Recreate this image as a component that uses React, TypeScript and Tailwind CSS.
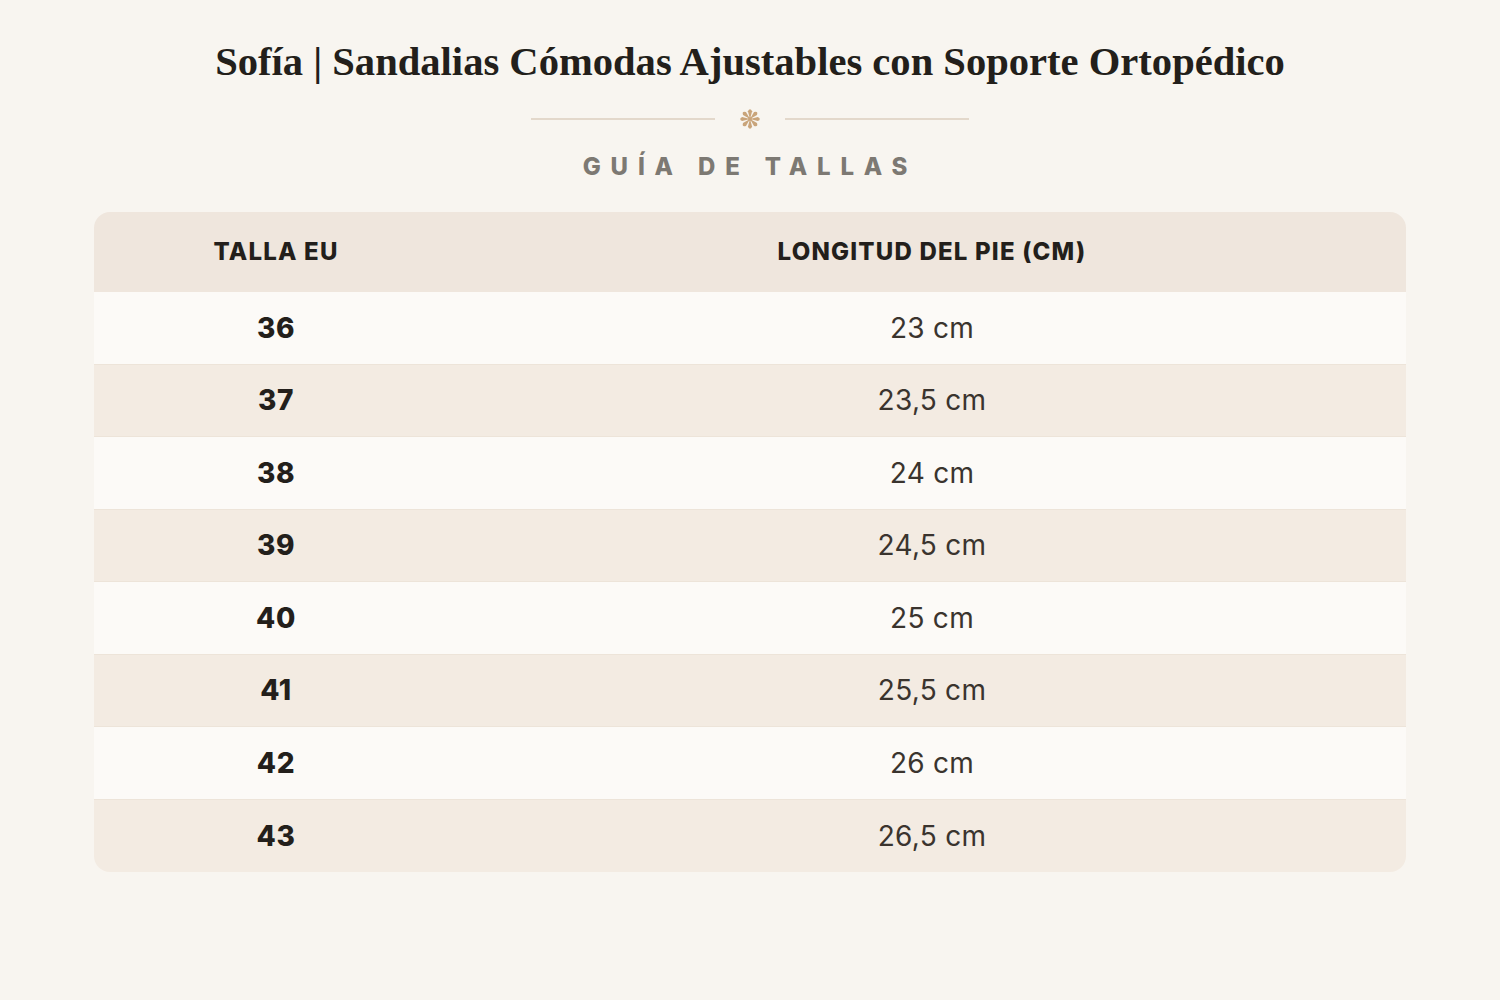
import React from "react";

const rows = [
  ["36", "23 cm"],
  ["37", "23,5 cm"],
  ["38", "24 cm"],
  ["39", "24,5 cm"],
  ["40", "25 cm"],
  ["41", "25,5 cm"],
  ["42", "26 cm"],
  ["43", "26,5 cm"],
];

function Star() {
  const arms = [0, 45, 90, 135, 180, 225, 270, 315];
  return (
    <svg width="24" height="24" viewBox="-12 -12 24 24" className="text-[#c9a47a]">
      <g fill="currentColor">
        {arms.map((a) => (
          <path key={a} d="M0 0 L-2.1 -7.8 Q0 -11.8 2.1 -7.8 Z" transform={`rotate(${a})`} />
        ))}
        <circle r="2" />
      </g>
    </svg>
  );
}

export default function App() {
  return (
    <div className="min-h-[1000px] w-full bg-[#f8f5f0] flex flex-col items-center pt-[38px] font-['Inter','Open_Sans',sans-serif]">
      <h1 className="font-['Liberation_Serif',serif] font-bold text-[40.6px] leading-[48px] text-[#231f1b]">
        Sofía | Sandalias Cómodas Ajustables con Soporte Ortopédico
      </h1>
      <div className="flex items-center gap-[23px] mt-[21px] h-[24px]">
        <div className="w-[184px] h-[2px] bg-[#e3d8cb]" />
        <Star />
        <div className="w-[184px] h-[2px] bg-[#e3d8cb]" />
      </div>
      <div className="mt-[21px] text-[24px] leading-[30px] font-extrabold tracking-[0.41em] text-[#7d7973]">
        GUÍA DE TALLAS
      </div>
      <div className="mt-[30px] w-[1312px] rounded-[16px] overflow-hidden">
        <div className="flex h-[80px] items-center bg-[#efe6dd] text-[#231f1b] font-extrabold text-[24px] tracking-[0.05em]">
          <div className="w-[364px] text-center">TALLA EU</div>
          <div className="flex-1 text-center">LONGITUD DEL PIE (CM)</div>
        </div>
        {rows.map(([s, l], i) => (
          <div
            key={s}
            className={
              "flex h-[72.5px] items-center " +
              (i % 2 === 0 ? "bg-[#fcfaf7]" : "bg-[#f3ebe2]") +
              (i < rows.length - 1 ? " border-b border-[#ede4d9]" : "")
            }
          >
            <div className="w-[364px] text-center font-extrabold text-[28px] tracking-[0.02em] text-[#231f1b]">{s}</div>
            <div className="flex-1 text-center text-[28px] tracking-[0.01em] text-[#3a342e]">{l}</div>
          </div>
        ))}
      </div>
    </div>
  );
}
